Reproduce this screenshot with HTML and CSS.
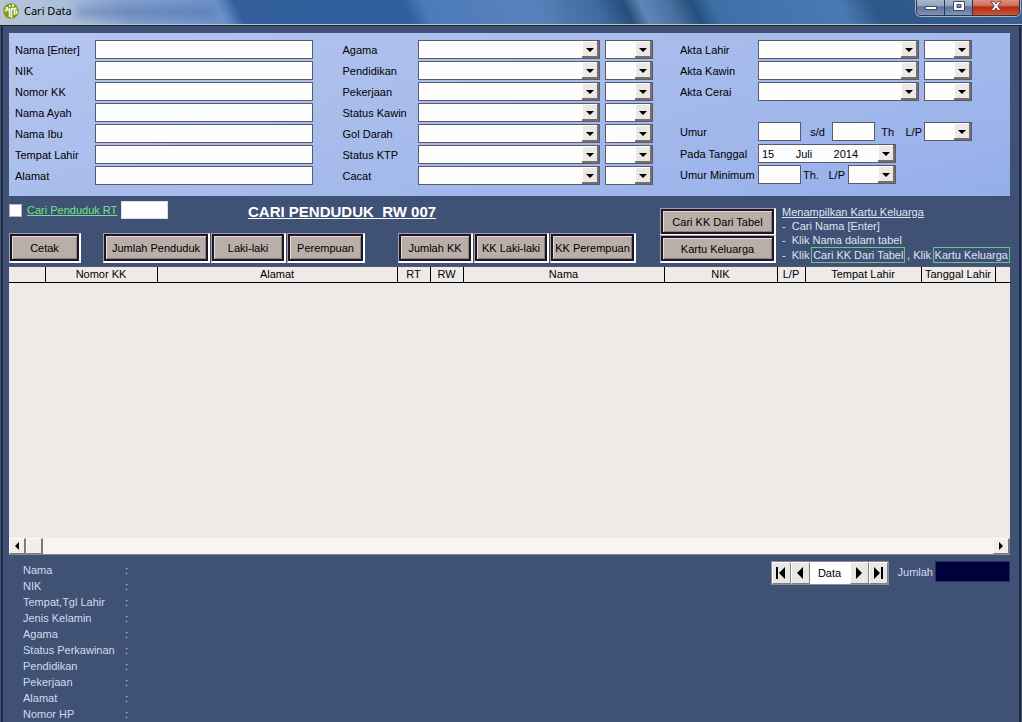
FILE: index.html
```html
<!DOCTYPE html>
<html lang="id">
<head>
<meta charset="utf-8">
<title>Cari Data</title>
<link rel="stylesheet" href="styles.css">
</head>
<body>
<div class="window">
<header class="titlebar">
<svg class="app-icon" viewBox="0 0 16 16" aria-hidden="true">
<circle cx="8" cy="8" r="7.8" fill="#7c9c1c"/>
<path d="M3 5h2M6 3h1.500M9 2.500h2M12 5.500h1.500" stroke="#fff" stroke-width="2"/>
<path d="M2.500 8.500V7h4v7M6.500 5v3M8.500 15V6h3v6M10 4.500v2M13.500 7.500V11" stroke="#f4fae0" stroke-width="1.500" fill="none"/>
</svg>
<h1 class="caption">Cari Data</h1>
<span class="ghost"></span>
<div class="win-buttons">
<button class="win-btn" aria-label="Minimize"><svg viewBox="0 0 14 12"><rect x="1.500" y="6.500" width="11" height="3" fill="#fff" stroke="#444b60"/></svg></button>
<button class="win-btn" aria-label="Maximize"><svg viewBox="0 0 14 12"><path fill-rule="evenodd" d="M1.500 1.500h11v9h-11zM5 4.500h4v3H5z" fill="#fff" stroke="#444b60"/></svg></button>
<button class="win-btn close" aria-label="Close"><svg viewBox="0 0 14 12"><path d="M2 1.500h3l2 2.500 2-2.500h3L8.700 6l3.300 4.500H9L7 8l-2 2.500H2L5.300 6z" fill="#fff" stroke="#5b3038" stroke-width=".8"/></svg></button>
</div>
</header>
<main class="client">
<form class="panel">
<div class="fields first">
<div class="row"><label for="nama">Nama [Enter]</label><input class="box" id="nama"></div>
<div class="row"><label for="nik">NIK</label><input class="box" id="nik"></div>
<div class="row"><label for="kk">Nomor KK</label><input class="box" id="kk"></div>
<div class="row"><label for="ayah">Nama Ayah</label><input class="box" id="ayah"></div>
<div class="row"><label for="ibu">Nama Ibu</label><input class="box" id="ibu"></div>
<div class="row"><label for="lahir">Tempat Lahir</label><input class="box" id="lahir"></div>
<div class="row"><label for="alamat">Alamat</label><input class="box" id="alamat"></div>
</div>
<div class="fields second">
<div class="row"><label for="agama">Agama</label><span class="combo wide"><select id="agama"></select></span><span class="combo"><select aria-label="Agama 2"></select></span></div>
<div class="row"><label for="didik">Pendidikan</label><span class="combo wide"><select id="didik"></select></span><span class="combo"><select aria-label="Pendidikan 2"></select></span></div>
<div class="row"><label for="kerja">Pekerjaan</label><span class="combo wide"><select id="kerja"></select></span><span class="combo"><select aria-label="Pekerjaan 2"></select></span></div>
<div class="row"><label for="kawin">Status Kawin</label><span class="combo wide"><select id="kawin"></select></span><span class="combo"><select aria-label="Status Kawin 2"></select></span></div>
<div class="row"><label for="darah">Gol Darah</label><span class="combo wide"><select id="darah"></select></span><span class="combo"><select aria-label="Gol Darah 2"></select></span></div>
<div class="row"><label for="ktp">Status KTP</label><span class="combo wide"><select id="ktp"></select></span><span class="combo"><select aria-label="Status KTP 2"></select></span></div>
<div class="row"><label for="cacat">Cacat</label><span class="combo wide"><select id="cacat"></select></span><span class="combo"><select aria-label="Cacat 2"></select></span></div>
</div>
<div class="fields third">
<div class="row"><label for="alahir">Akta Lahir</label><span class="combo wide"><select id="alahir"></select></span><span class="combo"><select aria-label="Akta Lahir 2"></select></span></div>
<div class="row"><label for="akawin">Akta Kawin</label><span class="combo wide"><select id="akawin"></select></span><span class="combo"><select aria-label="Akta Kawin 2"></select></span></div>
<div class="row"><label for="acerai">Akta Cerai</label><span class="combo wide"><select id="acerai"></select></span><span class="combo"><select aria-label="Akta Cerai 2"></select></span></div>
<div class="row ages"><label for="umur">Umur</label><input class="box age" id="umur"><label class="mini sd" for="umur2">s/d</label><input class="box age" id="umur2"><span class="mini th">Th</span><label class="mini lp" for="lp1">L/P</label><span class="combo"><select id="lp1"></select></span></div>
<div class="row"><label for="tanggal">Pada Tanggal</label><span class="combo date"><select id="tanggal"><option>15 &nbsp; &nbsp; &nbsp;&nbsp;Juli &nbsp; &nbsp; &nbsp;&nbsp;2014</option></select></span></div>
<div class="row"><label for="umin">Umur Minimum</label><input class="box age" id="umin"><span class="mini thmin">Th.</span><label class="mini lpmin" for="lp2">L/P</label><span class="combo"><select id="lp2"></select></span></div>
</div>
</form>
<section class="tools">
<div class="tools-left">
<div class="rt-row"><input type="checkbox" class="tick" id="rt"><label class="rt-label" for="rt">Cari Penduduk RT</label><input class="rt-box" aria-label="RT"><h2 class="heading">CARI PENDUDUK&nbsp; RW 007</h2></div>
<div class="btn-row">
<button class="btn w72">Cetak</button>
<div class="btn-group"><button class="btn w107">Jumlah Penduduk</button><button class="btn w75">Laki-laki</button><button class="btn w78">Perempuan</button></div>
<div class="btn-group kk"><button class="btn w75">Jumlah KK</button><button class="btn w75">KK Laki-laki</button><button class="btn w86">KK Perempuan</button></div>
</div>
</div>
<div class="stack"><button class="btn">Cari KK Dari Tabel</button><button class="btn">Kartu Keluarga</button></div>
<div class="help">
<p class="help-title">Menampilkan Kartu Keluarga</p>
<p>-&nbsp; Cari Nama [Enter]</p>
<p>-&nbsp; Klik Nama dalam tabel</p>
<p class="help-last">-&nbsp; Klik <span class="key">Cari KK Dari Tabel</span> , Klik <span class="key">Kartu Keluarga</span></p>
</div>
</section>
<section class="grid">
<table class="table">
<colgroup><col class="c-mark"><col class="c-kk"><col class="c-alamat"><col class="c-rt"><col class="c-rt"><col class="c-nama"><col class="c-nik"><col class="c-lp"><col class="c-tempat"><col class="c-tgl"><col class="c-end"></colgroup>
<thead><tr><th></th><th>Nomor KK</th><th>Alamat</th><th>RT</th><th>RW</th><th>Nama</th><th>NIK</th><th>L/P</th><th>Tempat Lahir</th><th>Tanggal Lahir</th><th></th></tr></thead>
</table>
<div class="scroll">
<button class="scroll-btn" aria-label="Gulir kiri"><svg viewBox="0 0 8 8"><path d="M6 0v8L2 4z"/></svg></button>
<span class="thumb"></span>
<button class="scroll-btn end" aria-label="Gulir kanan"><svg viewBox="0 0 8 8"><path d="M2 0v8l4-4z"/></svg></button>
</div>
</section>
<section class="footer">
<dl class="details">
<dt>Nama</dt><dd>:</dd>
<dt>NIK</dt><dd>:</dd>
<dt>Tempat,Tgl Lahir</dt><dd>:</dd>
<dt>Jenis Kelamin</dt><dd>:</dd>
<dt>Agama</dt><dd>:</dd>
<dt>Status Perkawinan</dt><dd>:</dd>
<dt>Pendidikan</dt><dd>:</dd>
<dt>Pekerjaan</dt><dd>:</dd>
<dt>Alamat</dt><dd>:</dd>
<dt>Nomor HP</dt><dd>:</dd>
</dl>
<div class="nav">
<button class="nav-btn" aria-label="Pertama"><svg viewBox="0 0 12 12"><path d="M1 0h2v12H1zM10 0v12L4 6z"/></svg></button>
<button class="nav-btn" aria-label="Sebelumnya"><svg viewBox="0 0 12 12"><path d="M9 0v12L3 6z"/></svg></button>
<span class="nav-text">Data</span>
<button class="nav-btn" aria-label="Berikutnya"><svg viewBox="0 0 12 12"><path d="M3 0v12l6-6z"/></svg></button>
<button class="nav-btn" aria-label="Terakhir"><svg viewBox="0 0 12 12"><path d="M2 0v12l6-6zM9 0h2v12H9z"/></svg></button>
</div>
<label class="sum-label" for="jumlah">Jumlah</label>
<input class="sum" id="jumlah" readonly>
</section>
</main>
</div>
</body>
</html>
```
FILE: styles.css
```css
* { box-sizing: border-box; }
body {
  margin: 0;
  font-family: "Liberation Sans", Arial, sans-serif;
  font-size: 11px;
  line-height: 14px;
  color: #000;
  overflow: hidden;
}
button, input, select { font: inherit; color: inherit; margin: 0; padding: 0; border-radius: 0; }
h1, h2, p, dl, dd { margin: 0; font-weight: normal; }

.window { min-height: 100vh; display: flex; flex-direction: column; background: #3f5175; }

.titlebar {
  height: 26px;
  display: flex;
  align-items: flex-start;
  padding-left: 3px;
  border-bottom: 1px solid #222838;
  box-shadow: inset 0 -1px #b9c0cc;
  background: linear-gradient(65deg, #b9c5d6 0, #a9bedc 70px, #7f9fd0 120px, #6a90cc 206px, #33609c 222px, #2f5f9e 375px, #4c7bba 392px, #5882bb 490px, #3d6a9f 550px, #274d79 574px, #5f86ba 590px, #4a719f 615px, #24507c 636px, #3f6fa8 655px, #4a79b3 770px, #2c5789 800px, #3b5f90 100%);
}
.app-icon { width: 16px; height: 16px; margin-top: 3px; }
.caption { margin-left: 5px; font-family: "Noto Sans", sans-serif; font-size: 11px; line-height: 22px; }
.ghost { width: 138px; height: 8px; margin: 8px 0 0 4px; background: #52688f; opacity: .5; filter: blur(4px); }
.win-buttons {
  display: flex;
  margin: 0 2px 0 auto;
  height: 16px;
  border: 1px solid #2c3750;
  border-top: 0;
  border-radius: 0 0 5px 5px;
  overflow: hidden;
  box-shadow: 0 0 0 1px #a6b4c9;
}
.win-btn {
  width: 28px;
  border: 0;
  border-right: 1px solid #2c3750;
  background: linear-gradient(#a9b8cf 0, #93a4bf 40%, #5d7296 45%, #7f96b8 100%);
  display: flex;
  justify-content: center;
}
.win-btn svg { width: 14px; height: 12px; }
.win-btn.close { width: 46px; border-right: 0; background: linear-gradient(#dd8f80 0, #cf6a55 40%, #b52a14 45%, #d0532f 100%); }

.client {
  flex: 1;
  display: flex;
  flex-direction: column;
  padding: 7px 9px 0 6px;
  margin: 0 1px 0 1px;
  border: solid #1f2a42;
  border-width: 0 2px;
}

.panel {
  display: grid;
  grid-template-columns: 298fr 341fr 318fr;
  padding: 7px 38px 11px 6px;
  background: linear-gradient(165deg, #b4c6f0 0, #a9bdec 40%, #9fb6ec 75%, #94aeea 100%);
}
.fields { display: flex; flex-direction: column; gap: 2px; }
.second { padding-left: 30px; }
.third { padding-left: 27px; }
.row { display: flex; align-items: center; height: 19px; gap: 5px; }
.row > label:first-child { width: 75px; flex: none; white-space: nowrap; }
.second .row > label:first-child { width: 70px; }
.third .row > label:first-child { width: 73px; }
.box { flex: 1; min-width: 0; height: 19px; border: 1px solid #5b5a68; background: #fdfdfd; }
.box.age { flex: none; width: 43px; }
.combo { display: grid; grid-template-columns: 1fr 17px; width: 48px; height: 19px; border: 1px solid #5b5a68; background: #fdfdfd; }
.combo.wide { flex: 1; }
.combo.date { width: 138px; }
.combo select {
  grid-area: 1 / 1 / 2 / 3;
  min-width: 0;
  appearance: none;
  border: 0;
  background: none;
  padding-left: 3px;
  width: 100%;
}
.combo::before, .combo::after { content: ""; grid-area: 1 / 2 / 2 / 3; pointer-events: none; }
.combo::before { background: #ece8e4; border: solid #75706f; border-width: 0 2px 2px 0; box-shadow: inset 1px 1px #fff; }
.combo::after { width: 8px; height: 4px; margin: 7px 0 0 4px; background: #000; clip-path: polygon(0 0, 100% 0, 50% 100%); z-index: 1; }
.row.ages { margin-top: 19px; margin-bottom: 1px; }
.row .mini { flex: none; white-space: nowrap; text-align: right; }
.ages, .row:last-child { gap: 0; }
.first .row, .second .row { gap: 5px; }
.ages > label:first-child, .third .row:last-child > label:first-child { margin-right: 5px; }
.mini.sd { width: 24px; margin-right: 7px; }
.mini.th { width: 19px; }
.mini.lp { width: 28px; margin-right: 2px; }
.mini.thmin { width: 18px; }
.mini.lpmin { width: 26px; margin-right: 3px; }

.tools { display: flex; padding-bottom: 3px; height: 70px; }
.tools-left { flex: 1; min-width: 0; display: flex; flex-direction: column; }
.rt-row { display: flex; align-items: center; height: 28px; margin-bottom: 9px; }
.tick { appearance: none; width: 13px; height: 13px; background: #fff; border: 1px solid #b3b3b8; }
.tick:checked { background: #3f5073; box-shadow: inset 0 0 0 2px #fff; }
.rt-label { margin-left: 5px; width: 94px; color: #6fe486; text-decoration: underline; white-space: nowrap; }
.rt-box { width: 47px; height: 18px; border: 1px solid #ddd; background: #fff; }
.heading { margin: 4px 0 0 80px; color: #fff; font-size: 15px; line-height: 18px; font-weight: bold; text-decoration: underline; white-space: nowrap; }
.btn-row { display: flex; }
.btn-group { display: flex; gap: 1px; margin-left: 22px; }
.btn-group.kk { margin-left: 33px; }
.btn {
  height: 30px;
  border: solid;
  border-width: 1px 2px 2px 1px;
  border-color: #a79eaa #fff #fff #a79eaa;
  background: #b9afa8;
  box-shadow: inset 0 0 0 2px #1d1626, inset 3px 3px #e3dad9, inset -3px -3px #8d827f;
  white-space: nowrap;
}
.w72 { width: 72px; }
.w75 { width: 75px; }
.w78 { width: 78px; }
.w86 { width: 86px; }
.w107 { width: 107px; }
.stack { width: 116px; margin-top: 12px; display: flex; flex-direction: column; }
.stack .btn { height: 28px; }
.stack .btn:first-child { border-bottom-width: 1px; height: 27px; }
.help { width: 228px; margin: 9px 0 0 6px; color: #dfe5f2; white-space: nowrap; }
.help-title { text-decoration: underline; }
.key { display: inline-block; border: 1px solid #63c984; line-height: 14px; padding: 0 1px; }
.help-last { display: flex; align-items: center; justify-content: space-between; }

.grid { background: #eeeae7; height: 289px; display: flex; flex-direction: column; border-top: 1px solid #55586a; }
.table { width: 100%; table-layout: fixed; border-collapse: collapse; }
.table th { height: 15px; padding: 0; font-weight: normal; line-height: 13px; border-right: 1px solid #000; border-bottom: 1px solid #000; white-space: nowrap; }
.table th:last-child { border-right: 0; }
.c-mark { width: 36px; }
.c-kk { width: 112px; }
.c-alamat { width: 240px; }
.c-rt { width: 33px; }
.c-nama { width: 201px; }
.c-nik { width: 113px; }
.c-lp { width: 28px; }
.c-tempat { width: 116px; }
.c-tgl { width: 74px; }
.scroll { margin-top: auto; height: 17px; display: flex; background: #f6f5f3; border-bottom: 1px solid #8a8684; }
.scroll-btn, .thumb { width: 17px; background: #f0edea; border: solid; border-width: 1px 2px 1px 1px; border-color: #fff #807a76 #807a76 #fff; }
.scroll-btn { display: grid; place-items: center; }
.scroll-btn svg { width: 8px; height: 8px; }
.scroll-btn.end { margin-left: auto; }

.footer { display: flex; align-items: flex-start; padding: 6px 0 0 14px; color: #d3daea; }
.details { display: grid; grid-template-columns: 102px 20px; line-height: 16px; margin: 1px auto 0 0; }
.nav { display: flex; height: 24px; background: #fff; border: 1px solid #8b8c92; color: #000; }
.nav-btn { width: 19px; border: 1px solid; border-color: #fff #86807d #86807d #fff; background: #e9e7e6; display: grid; place-items: center; }
.nav-btn svg { width: 12px; height: 12px; }
.nav-text { width: 40px; text-align: center; line-height: 23px; }
.sum-label { margin: 4px 2px 0 9px; }
.sum { width: 75px; height: 21px; border: 1px solid #25305a; background: #00003c; color: #fff; }
```
